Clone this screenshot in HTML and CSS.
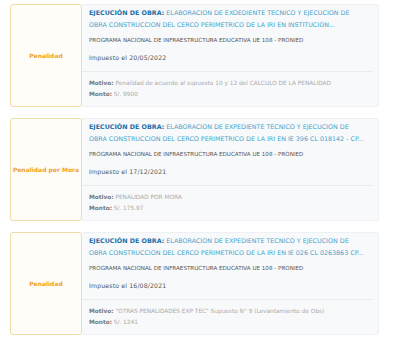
FILE: index.html
```html
<!DOCTYPE html>
<html lang="es">
<head>
    <meta charset="UTF-8">
    <meta name="viewport" content="width=device-width, initial-scale=1.0">
    <title>Penalidades</title>
    <link rel="stylesheet" href="styles.css">
</head>
<body>
    <div class="list">
        <div class="card">
            <div class="tag">Penalidad</div>
            <div class="body">
                <div class="top">
                    <div class="title"><b>EJECUCIÓN DE OBRA:</b> ELABORACION DE EXOEDIENTE TECNICO Y EJECUCION DE OBRA CONSTRUCCION DEL CERCO PERIMETRICO DE LA IRI EN INSTITUCION...</div>
                    <div class="program">PROGRAMA NACIONAL DE INFRAESTRUCTURA EDUCATIVA UE 108 - PRONIED</div>
                    <div class="date">Impuesto el 20/05/2022</div>
                </div>
                <div class="info">
                    <div><span class="label">Motivo:</span> Penalidad de acuerdo al supuesto 10 y 12 del CALCULO DE LA PENALIDAD</div>
                    <div><span class="label">Monto:</span> S/. 9900</div>
                </div>
            </div>
        </div>

        <div class="card">
            <div class="tag">Penalidad por Mora</div>
            <div class="body">
                <div class="top">
                    <div class="title"><b>EJECUCIÓN DE OBRA:</b> ELABORACION DE EXPEDIENTE TECNICO Y EJECUCION DE OBRA CONSTRUCCION DEL CERCO PERIMETRICO DE LA IRI EN IE 396 CL 018142 - CP...</div>
                    <div class="program">PROGRAMA NACIONAL DE INFRAESTRUCTURA EDUCATIVA UE 108 - PRONIED</div>
                    <div class="date">Impuesto el 17/12/2021</div>
                </div>
                <div class="info">
                    <div><span class="label">Motivo:</span> PENALIDAD POR MORA</div>
                    <div><span class="label">Monto:</span> S/. 175.97</div>
                </div>
            </div>
        </div>

        <div class="card">
            <div class="tag">Penalidad</div>
            <div class="body">
                <div class="top">
                    <div class="title"><b>EJECUCIÓN DE OBRA:</b> ELABORACION DE EXPEDIENTE TECNICO Y EJECUCION DE OBRA CONSTRUCCION DEL CERCO PERIMETRICO DE LA IRI EN IE 026 CL 0263863 CP...</div>
                    <div class="program">PROGRAMA NACIONAL DE INFRAESTRUCTURA EDUCATIVA UE 108 - PRONIED</div>
                    <div class="date">Impuesto el 16/08/2021</div>
                </div>
                <div class="info">
                    <div><span class="label">Motivo:</span> "OTRAS PENALIDADES EXP TEC" Supuesto N° 9 (Levantamiento de Obs)</div>
                    <div><span class="label">Monto:</span> S/. 1241</div>
                </div>
            </div>
        </div>
    </div>
</body>
</html>
```

FILE: styles.css
```css
body {
    margin: 0;
    font-family: "DejaVu Sans", sans-serif;
    background: white;
}

.list {
    display: flex;
    flex-direction: column;
    gap: 11px;
    padding: 4px 20px 0 10px;
}

.card {
    display: flex;
    height: 103px;
}

.tag {
    width: 72px;
    flex-shrink: 0;
    box-sizing: border-box;
    display: flex;
    align-items: center;
    justify-content: center;
    white-space: nowrap;
    background: #fffdf8;
    border: 1px solid #f0dca8;
    border-radius: 3px;
    color: #f0a22a;
    font-size: 6px;
    font-weight: bold;
}

.body {
    flex: 1;
    min-width: 0;
    display: flex;
    flex-direction: column;
    background: #f8f9fb;
    border: 1px solid #eef0f3;
    border-left: none;
    border-radius: 0 3px 3px 0;
}

.top {
    padding: 2px 8px 7px 7px;
    margin-right: 5px;
    border-bottom: 1px solid #e9ecef;
}

.title {
    font-size: 6.35px;
    line-height: 12px;
    color: #45a3c9;
    white-space: pre-line;
}

.title b {
    color: #1f6fa6;
}

.program {
    margin-top: 3px;
    font-size: 5.6px;
    line-height: 12px;
    color: #555;
}

.date {
    margin-top: 6px;
    font-size: 6.2px;
    letter-spacing: 0.15px;
    line-height: 12px;
    color: #555;
}

.info {
    padding: 6px 8px 0 7px;
    font-size: 5.8px;
    line-height: 11px;
    color: #aaa;
}

.label {
    color: #777;
    font-weight: bold;
}
```
